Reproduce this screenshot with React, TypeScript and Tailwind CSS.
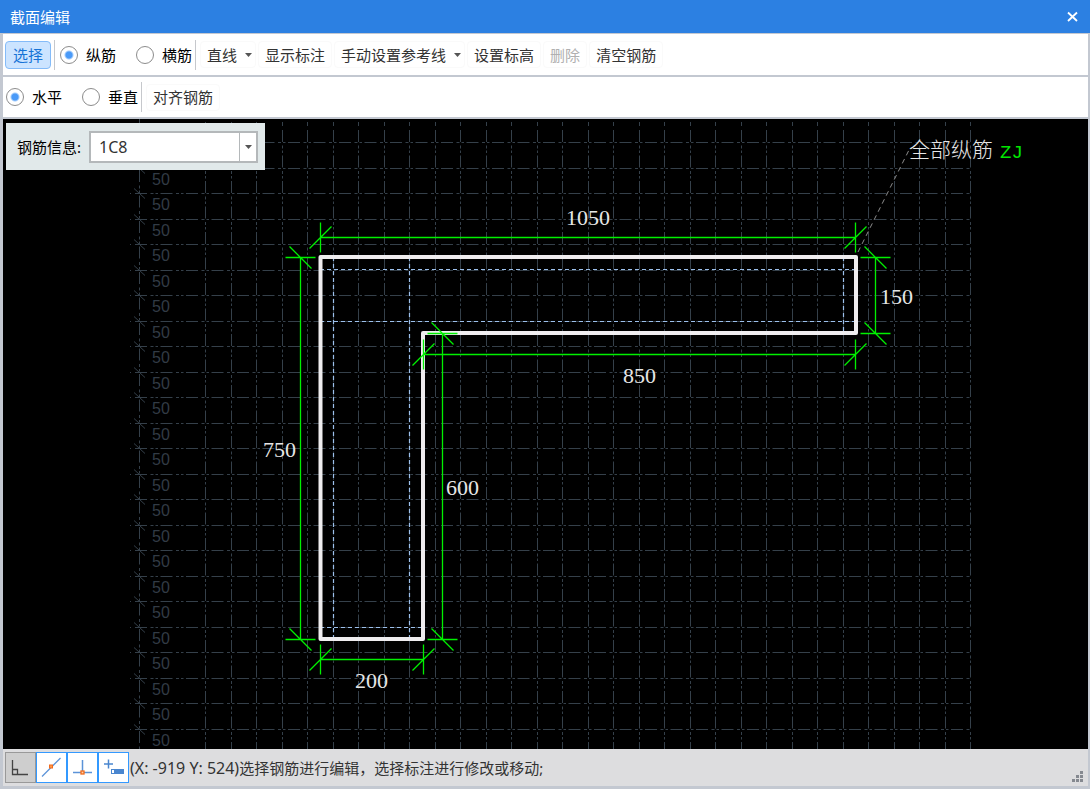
import React from "react";

const STEP = 25.5;
const ROWS = Array.from({ length: 24 }, (_, i) => Math.round(142 + i * STEP) + 0.5);
const COLS = Array.from({ length: 31 }, (_, i) => Math.round(205 + i * STEP) + 0.5);
const GRID_DASH = "12 3.5 3 2 2.5 2.5";

function Arrow() {
  return (
    <svg width="7" height="4" viewBox="0 0 7 4" aria-hidden="true">
      <path d="M0 0H7L3.5 4Z" fill="#555" />
    </svg>
  );
}

function Separator() {
  return <div className="h-[30px] w-px shrink-0 bg-[#c6c8cc]" />;
}

function Radio({ name, label, checked }: { name: string; label: string; checked?: boolean }) {
  return (
    <label className="flex shrink-0 items-center gap-2 text-black">
      <input
        type="radio"
        name={name}
        defaultChecked={checked}
        className="size-[18px] appearance-none rounded-full border border-[#8c8c8c] bg-white checked:bg-[radial-gradient(circle,#4a9af8_3px,transparent_5px)]"
      />
      {label}
    </label>
  );
}

function ToolButton({ label, menu, disabled }: { label: string; menu?: boolean; disabled?: boolean }) {
  return (
    <button
      type="button"
      disabled={disabled}
      className={
        menu
          ? "flex h-[27px] shrink-0 items-center gap-2 rounded border border-[#fafafa] pr-[3px] pl-1.5 text-[#333]"
          : "flex h-[27px] shrink-0 items-center rounded border border-[#fafafa] px-1.5 text-[#333] disabled:text-[#b0b0b0]"
      }
    >
      {label}
      {menu && <Arrow />}
    </button>
  );
}

/* A dimension line with an extension line and a slash at each end. */
function HDim({ x1, x2, y }: { x1: number; x2: number; y: number }) {
  return (
    <path
      d={[`M${x1} ${y}H${x2}`, ...[x1, x2].map((x) => `M${x} ${y - 15}v30M${x - 11} ${y + 11}l22 -22`)].join("")}
    />
  );
}

function VDim({ y1, y2, x }: { y1: number; y2: number; x: number }) {
  return (
    <path
      d={[`M${x} ${y1}V${y2}`, ...[y1, y2].map((y) => `M${x - 15} ${y}h30M${x - 11} ${y - 11}l22 22`)].join("")}
    />
  );
}

function Drawing() {
  return (
    <svg
      className="block h-auto w-full"
      viewBox="3 119 1085 630"
      preserveAspectRatio="xMinYMin meet"
      role="img"
      aria-label="截面"
    >
      <g stroke="#35404a" fill="none" strokeDasharray={GRID_DASH}>
        {COLS.map((x) => (
          <path key={x} d={`M${x} 130V749`} />
        ))}
        {COLS.map((x) => (
          <path key={x} d={`M${x} 122v4`} strokeDasharray="none" />
        ))}
        <path d="M139.5 119V749" />
        {ROWS.map((y) => (
          <path key={y} d={`M135 ${y}H971`} />
        ))}
      </g>
      <g stroke="#35404a" fill="none">
        {ROWS.map((y) => (
          <path key={y} d={`M134 ${y - 5}l11 10M130 ${y}h1`} />
        ))}
      </g>
      <g fill="#323b45" fontFamily="'Liberation Sans', sans-serif" fontSize="16">
        {ROWS.slice(1).map((y) => (
          <text key={y} x="152" y={Math.floor(y + 17)}>
            50
          </text>
        ))}
      </g>
      <g stroke="#9cc0ec" strokeWidth="1.2" fill="none" strokeDasharray="4 3">
        <path d="M333.5 257V639M409.5 257V639M843.5 257V333M320 269.5H856M320 321.5H856M320 627.5H424" />
      </g>
      <path
        d="M320.5 257H856V333H423V639H320.5Z"
        fill="none"
        stroke="#efedef"
        strokeWidth="4"
        strokeLinejoin="round"
      />
      <g stroke="#00f000" strokeWidth="1.3" fill="none">
        <HDim x1={320.5} x2={855.5} y={237.5} />
        <HDim x1={423.5} x2={855.5} y={354.5} />
        <HDim x1={320.5} x2={423.5} y={659.5} />
        <VDim x={300.5} y1={257.5} y2={639.5} />
        <VDim x={875.5} y1={257.5} y2={333.5} />
        <VDim x={442.5} y1={333.5} y2={639.5} />
      </g>
      <path d="M858 252L909 150" stroke="#8c8c8c" strokeDasharray="5 4" fill="none" />
      <g fill="#e6e6e6" fontFamily="'Liberation Serif', serif" fontSize="22">
        <text x="566" y="225">1050</text>
        <text x="880" y="304">150</text>
        <text x="623" y="383">850</text>
        <text x="446" y="495">600</text>
        <text x="355" y="688">200</text>
        <text x="263" y="457">750</text>
      </g>
      <text x="909" y="157" fill="#e6e6e6" fontFamily="'Noto Sans CJK SC', sans-serif" fontSize="21" fontWeight="300">
        全部纵筋
      </text>
      <text x="1000" y="158" fill="#00e600" fontFamily="'Liberation Mono', monospace" fontSize="19">
        ZJ
      </text>
    </svg>
  );
}

function SnapButton({ label, active, children }: { label: string; active?: boolean; children: React.ReactNode }) {
  return (
    <button
      type="button"
      aria-label={label}
      className={
        active
          ? "flex size-[31px] items-center justify-center border border-[#3399ff] bg-white"
          : "flex size-[31px] items-center justify-center border border-[#999] bg-[#cecece]"
      }
    >
      <svg width="29" height="29" viewBox="0 0 29 29" fill="none" aria-hidden="true">
        {children}
      </svg>
    </button>
  );
}

export default function App() {
  return (
    <div className="flex min-h-screen flex-col bg-[#c3c8d1] font-['Noto_Sans','Noto_Sans_CJK_SC',sans-serif] text-[15px] leading-5">
      <header className="flex h-[33px] items-center justify-between bg-[#2c80e2] pr-3 pl-[10px] text-white">
        <h1>截面编辑</h1>
        <button type="button" aria-label="关闭" className="flex size-3 items-center justify-center">
          <svg width="12" height="12" viewBox="0 0 12 12" aria-hidden="true">
            <path d="M2 1.5L11 10M11 1.5L2 10" stroke="#fff" strokeWidth="1.8" />
          </svg>
        </button>
      </header>

      <div className="mr-[2px] mb-[3px] ml-[3px] flex grow flex-col">
        <div className="mt-px flex h-[41px] items-center bg-white pl-[2px]">
          <button
            type="button"
            className="mr-[3px] h-7 shrink-0 rounded border border-[#84bbf8] bg-[#cce4ff] px-[7px] text-[#1673d6]"
          >
            选择
          </button>
          <Separator />
          <div className="mr-[3px] ml-[5px] flex gap-5">
            <Radio name="bar" label="纵筋" checked />
            <Radio name="bar" label="横筋" />
          </div>
          <Separator />
          <div className="ml-1 flex gap-[2px]">
            <ToolButton label="直线" menu />
            <ToolButton label="显示标注" />
            <ToolButton label="手动设置参考线" menu />
            <ToolButton label="设置标高" />
            <ToolButton label="删除" disabled />
            <ToolButton label="清空钢筋" />
          </div>
        </div>
        <div className="mt-[2px] flex h-10 items-center bg-white pl-[3px]">
          <div className="mr-[3px] flex gap-5">
            <Radio name="direction" label="水平" checked />
            <Radio name="direction" label="垂直" />
          </div>
          <Separator />
          <div className="ml-1">
            <ToolButton label="对齐钢筋" />
          </div>
        </div>

        <main className="relative mt-[2px] grow overflow-hidden bg-black">
          <Drawing />
          <div className="absolute top-1 left-[3px] flex h-[47px] items-center bg-[#e1e9ea] pr-[7px] pl-[11px]">
            <label htmlFor="bar-info" className="mr-2 text-black">
              钢筋信息:
            </label>
            <div className="flex h-8 border-2 border-[#b4b8ba] bg-white">
              <input
                id="bar-info"
                type="text"
                defaultValue="1C8"
                className="w-[148px] bg-white pl-2 text-base text-[#333] outline-none"
              />
              <button
                type="button"
                aria-label="展开"
                className="flex w-[17px] items-center justify-center border-l border-[#b4b8ba]"
              >
                <Arrow />
              </button>
            </div>
          </div>
        </main>

        <footer className="flex h-[37px] items-center bg-[#dddddf] pl-[2px] text-[#333]">
          <SnapButton label="正交">
            <path d="M6.5 7V21.5H22M6.5 16.5H11.5V21" stroke="#444" strokeWidth="1.3" />
          </SnapButton>
          <SnapButton label="中点" active>
            <path d="M5 23.5L23.5 5" stroke="#5b93d8" strokeWidth="1.3" />
            <rect x="12.5" y="12" width="3" height="3" fill="#ff9a4d" stroke="#f26a1b" />
          </SnapButton>
          <SnapButton label="垂足" active>
            <path d="M14.5 7V19M5 19.5H24" stroke="#5b93d8" strokeWidth="1.5" />
            <rect x="13" y="18" width="3" height="3" fill="#ffd0a8" stroke="#f26a1b" strokeWidth="1.3" />
          </SnapButton>
          <SnapButton label="动态输入" active>
            <path d="M9.5 6.5V15.500M5 11H14" stroke="#4a86cf" strokeWidth="1.5" />
            <rect x="12" y="16" width="13" height="5" fill="#4a86cf" />
            <rect x="13" y="17" width="2" height="3" fill="#fff" />
          </SnapButton>
          <output className="ml-px grow whitespace-nowrap">
            <span className="text-base leading-5">(X: -919 Y: 524)</span>
            选择钢筋进行编辑，选择标注进行修改或移动;
          </output>
          <svg className="mr-[5px] mb-1 self-end" width="11" height="11" viewBox="0 0 11 11" aria-hidden="true">
            <path
              d="M8 0h3v3h-3zM4 4h3v3h-3zM8 4h3v3h-3zM0 8h3v3h-3zM4 8h3v3h-3zM8 8h3v3h-3z"
              fill="#858990"
            />
          </svg>
        </footer>
      </div>
    </div>
  );
}
